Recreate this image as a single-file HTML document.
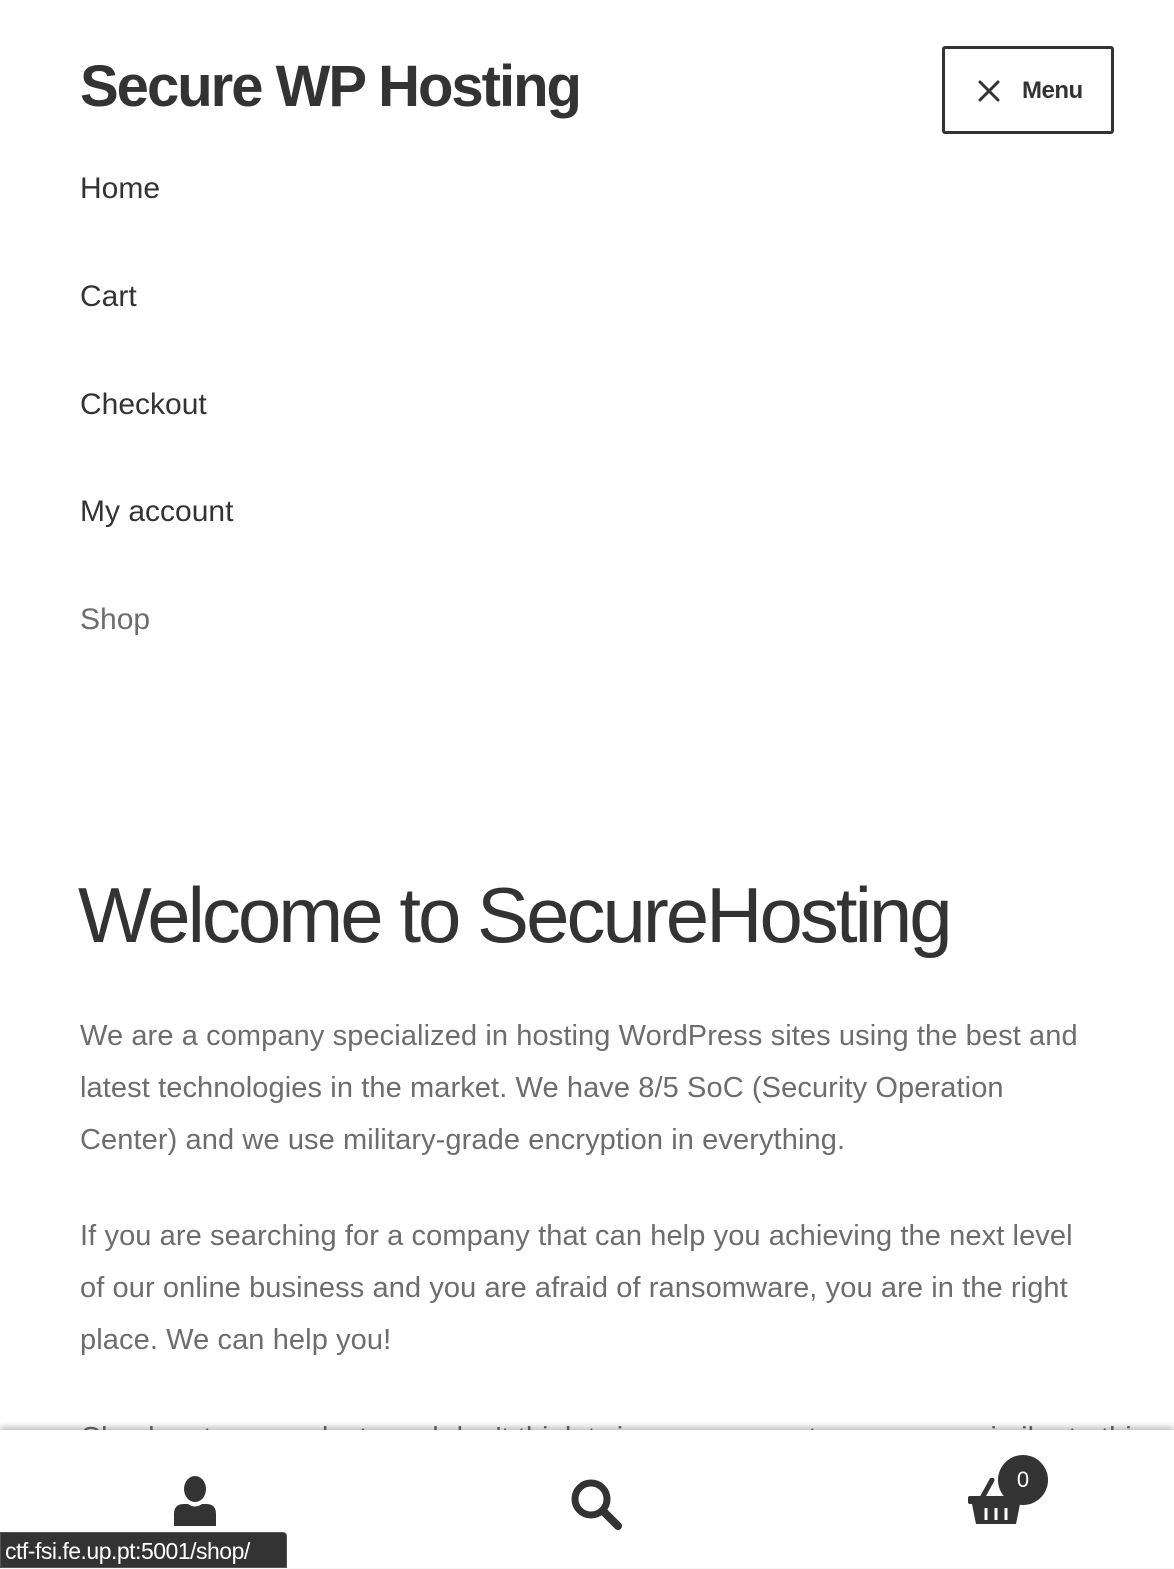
<!DOCTYPE html>
<html><head><meta charset="utf-8"><style>
body{margin:0;width:1174px;height:1568px;overflow:hidden;background:#fff;font-family:"Liberation Sans",sans-serif;color:#333;position:relative}
.title{position:absolute;left:80px;top:53px;font-size:58px;font-weight:bold;letter-spacing:-2px;color:#333}
.btn{position:absolute;left:942px;top:46px;width:166px;height:82px;border:3px solid #333;border-radius:3px;box-sizing:content-box}
.btn span{position:absolute;left:77px;top:28px;font-size:24px;font-weight:bold;letter-spacing:-0.5px}
.nav a{position:absolute;left:80px;font-size:30px;color:#333;text-decoration:none}
h1{position:absolute;left:78px;top:870px;margin:0;font-weight:300;font-size:78px;letter-spacing:-3px;color:#333;white-space:nowrap}
.p{position:absolute;left:80px;font-size:29px;line-height:52px;color:#6d6d6d;white-space:nowrap;letter-spacing:0.1px}
.bar{position:absolute;left:0;top:1430px;width:1174px;height:138px;background:#fff;box-shadow:0 -3px 6px rgba(0,0,0,.25)}
.tip{position:absolute;left:0;top:1532px;width:287px;height:36px;background:#333;border:1px solid #555;border-radius:0 4px 0 0;color:#fff;font-size:23px;line-height:36px;padding-left:4px;box-sizing:border-box;letter-spacing:-0.5px}
</style></head><body>
<div class="title">Secure WP Hosting</div>
<div class="btn"><svg style="position:absolute;left:32px;top:30px" width="24" height="24" viewBox="0 0 24 24"><path d="M3 3L21 21M21 3L3 21" stroke="#333" stroke-width="3" stroke-linecap="round"/></svg><span>Menu</span></div>
<div class="nav">
<a style="top:172px">Home</a>
<a style="top:280px">Cart</a>
<a style="top:388px">Checkout</a>
<a style="top:495px">My account</a>
<a style="top:603px;color:#6d6d6d">Shop</a>
</div>
<h1>Welcome to SecureHosting</h1>
<div class="p" style="top:1010px">We are a company specialized in hosting WordPress sites using the best and<br>latest technologies in the market. We have 8/5 SoC (Security Operation<br>Center) and we use military-grade encryption in everything.</div>
<div class="p" style="top:1210px">If you are searching for a company that can help you achieving the next level<br>of our online business and you are afraid of ransomware, you are in the right<br>place. We can help you!</div>
<div class="p" style="top:1412px">Check out our products and don't think twice, you are not a company similar to this</div>
<div class="bar">
<svg style="position:absolute;left:170px;top:44px" width="50" height="52" viewBox="0 0 50 52"><ellipse cx="25" cy="15" rx="11" ry="13" fill="#333"/><path d="M4 52V40Q4 30 14 30L18 30Q25 35 32 30L36 30Q46 30 46 40V52Z" fill="#333"/></svg>
<svg style="position:absolute;left:568px;top:46px" width="56" height="56" viewBox="0 0 56 56"><circle cx="23" cy="23" r="16" fill="none" stroke="#333" stroke-width="7"/><path d="M35 35L50 50" stroke="#333" stroke-width="8" stroke-linecap="round"/></svg>
<svg style="position:absolute;left:968px;top:48px" width="60" height="48" viewBox="0 0 60 48"><path d="M14 20L24 2" stroke="#333" stroke-width="5" stroke-linecap="round"/><rect x="0" y="18" width="56" height="8" rx="2" fill="#333"/><path d="M4 26H52L48 46H8Z" fill="#333"/><path d="M18 30V42M28 30V42M38 30V42" stroke="#fff" stroke-width="3"/></svg>
<div style="position:absolute;left:998px;top:25px;width:50px;height:50px;border-radius:50%;background:#333;color:#fff;font-size:22px;text-align:center;line-height:50px">0</div>
</div>
<div class="tip">ctf-fsi.fe.up.pt:5001/shop/</div>
</body></html>
